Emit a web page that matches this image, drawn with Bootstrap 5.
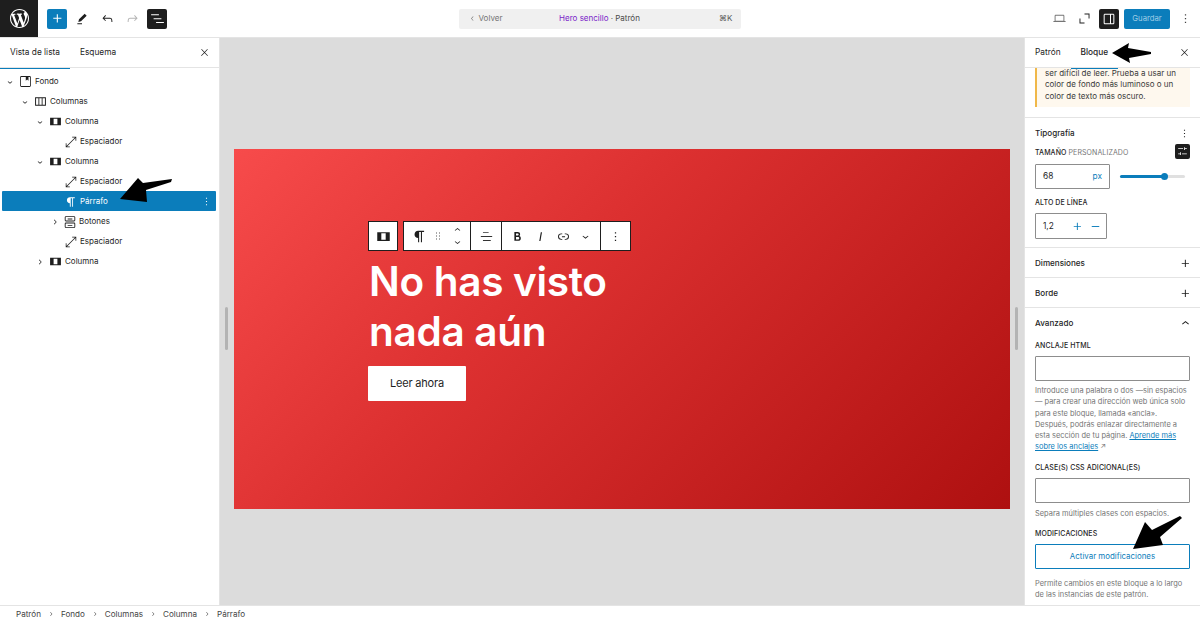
<!DOCTYPE html>
<html lang="es">
<head>
<meta charset="utf-8">
<title>Hero sencillo · Patrón</title>
<link rel="stylesheet" href="https://cdn.jsdelivr.net/npm/bootstrap@5.3.0/dist/css/bootstrap.min.css">
<style>
html,body{height:621px;overflow:hidden}
body{font-family:Inter,"Liberation Sans",sans-serif;font-size:8.3px;color:#1e1e1e;background:#fff;line-height:1.3}
svg{display:block;fill:currentColor}
.shell{height:621px;position:relative}
.topbar{height:38px;border-bottom:1px solid #e4e4e4;flex:none}
.wp-box{width:38px;height:37px;background:#1e1e1e;color:#fff;flex:none}
.ico-btn{width:20px;height:20px;padding:0;border:0;background:none;border-radius:2px;color:#1e1e1e;display:flex;align-items:center;justify-content:center;flex:none}
.ico-btn.blue{background:#0b7dbb;color:#fff}
.ico-btn.dark{background:#1e1e1e;color:#fff}
.ico-btn.faint{color:#b4b4b4}
.cmd{width:282px;height:20px;background:#f0f0f0;border-radius:2px;padding:0 8px 0 9px;color:#757575;position:relative;font-size:8px}
.cmd-title{position:absolute;left:0;right:0;text-align:center;color:#4a4a4a;top:4px}
.cmd-title b{font-weight:400;color:#7a25c9}
.save{height:20px;width:46px;padding:0;background:#0b7dbb;border:0;border-radius:2px;color:#9fcde6;font-size:7.7px}
.left{width:220px;border-right:1px solid #e4e4e4;flex:none}
.right{width:176px;border-left:1px solid #e4e4e4;flex:none;overflow:hidden}
.tabs{height:30px;border-bottom:1px solid #e4e4e4;flex:none;position:relative}
.tab-a{color:#1e1e1e;position:relative;height:30px;display:flex;align-items:center}
.tab-a.on:after{content:"";position:absolute;left:0;right:0;bottom:-1px;height:1px;background:#0b7dbb}
.tree{padding-top:3px;font-size:8px}
.trow{height:20px;margin:0 3px 0 2px;display:flex;align-items:center;border-radius:1px;position:relative;padding-top:1px}
.trow.sel{background:#0b7dbb;color:#fff}
.chev{width:10px;height:10px;flex:none;margin:0 -1px}
.tico{flex:none;width:13px;height:13px;margin-right:3px}
.big{width:14px;height:14px;margin:0 2px 0 -1px}
.lv0{padding-left:4px}.lv1{padding-left:19px}.lv2{padding-left:34px}.lv3{padding-left:49px}
.nochev{padding-left:63px}
.canvas{background:#dcdcdc;position:relative;padding:111px 14px 0}
.hero{height:360px;background:linear-gradient(135deg,#f74b4b 0%,#dc3030 40%,#ae1010 100%);padding:72px 0 0 134px}
.gutter{position:absolute;top:269px;width:3px;height:43px;background:#b3b3b3;border-radius:2px}
.blk{height:30px;gap:5px;margin-bottom:6px}
.blk-g{background:#fff;border:1px solid #1e1e1e;display:flex;align-items:center;height:30px}
.blk-c{height:28px;display:flex;align-items:center;justify-content:center;border-right:1px solid #1e1e1e}
.blk-c:last-child{border-right:0}
.hero-h{font-weight:600;font-size:40.5px;line-height:50px;color:#fff;margin:0 0 9px 1px;letter-spacing:-.3px}
.read{width:98px;height:35px;background:#fff;border-radius:1px;font-size:11px;color:#1e1e1e;display:flex;align-items:center;justify-content:center;letter-spacing:-.2px}
.scroll{overflow:hidden;flex:1}
.warn{margin:0 10px;height:39px;background:#fef8ee;border-left:2px solid #f0b849;color:#3a3a3a;padding-left:8px}
.warn p{margin:0;font-size:8px;line-height:11.4px}
.sect{border-top:1px solid #e4e4e4;padding:0 10px}
.sect-h{font-size:8.1px;font-weight:500;height:29px;padding-top:1px;display:flex;align-items:center;justify-content:space-between}
.lab{font-size:7px;font-weight:500;text-transform:uppercase;letter-spacing:.1px;line-height:10px;color:#1e1e1e;display:block}
.lab em{font-style:normal;color:#757575;font-weight:400}
.fld{border:1px solid #8d8d8d;border-radius:1px;height:25px;background:#fff;padding:0 7px;display:flex;align-items:center;justify-content:space-between}
.blue-t{color:#0b7dbb}
.help{font-size:7.45px;line-height:11.3px;color:#757575;margin:0;white-space:nowrap}
.help a{color:#0b7dbb}
.track{height:3px;width:65px;background:#e0e0e0;border-radius:2px;position:relative}
.fill{height:3px;width:44px;background:#0b7dbb;border-radius:2px}
.thumb{position:absolute;left:41px;top:-2px;width:7px;height:7px;border-radius:50%;background:#0b7dbb}
.txtbox.form-control{height:25px;min-height:0;border:1px solid #8d8d8d;border-radius:1px;padding:0;box-shadow:none}
.act{display:block;width:100%;height:25px;border:1px solid #0b7dbb;border-radius:1px;background:#fff;color:#0b7dbb;font-size:7.9px;padding:0}
.foot{height:16px;border-top:1px solid #e4e4e4;flex:none;padding:1px 0 0 16px;background:#fff;color:#444;font-size:8.1px}
.foot .sep{margin:0 6px;width:8px;height:8px}
.pins{position:absolute;left:0;top:0;pointer-events:none;fill:#000}
</style>
</head>
<body>
<svg width="0" height="0" style="position:absolute">
<defs>
<symbol id="i-down" viewBox="0 0 24 24"><path d="M17.500 11.600L12 16l-5.500-4.400.9-1.200L12 14l4.500-3.600 1 1.200z"/></symbol>
<symbol id="i-right" viewBox="0 0 24 24"><path d="M10.600 6L9.400 7l4.600 5-4.600 5 1.200 1 5.400-6z"/></symbol>
<symbol id="i-close" viewBox="0 0 24 24"><path d="M13 11.800l6.100-6.300-1-1-6.100 6.200-6.100-6.200-1 1 6.100 6.300-6.500 6.700 1 1 6.500-6.600 6.500 6.600 1-1z"/></symbol>
<symbol id="i-more" viewBox="0 0 24 24"><path d="M13 19h-2v-2h2v2zm0-6h-2v-2h2v2zm0-6h-2V5h2v2z"/></symbol>
<symbol id="i-plus" viewBox="0 0 24 24"><path d="M11 12.500V17.500H12.500V12.500H17.500V11H12.500V6H11V11H6V12.500H11Z"/></symbol>
<symbol id="i-minus" viewBox="0 0 24 24"><path d="M6 11.250h12v1.500H6z"/></symbol>
<symbol id="i-para" viewBox="0 0 24 24"><path d="m9.996 14v-.225l.004.000v6.225h1.500v-14.500h2.500v14.500h1.500v-14.500h3v-1.500h-8.504c-2.761 0-5 2.239-5 5 0 2.761 2.239 5 5 5z"/></symbol>
<symbol id="i-col" viewBox="0 0 24 24"><path fill-rule="evenodd" d="M2 5h20v14H2zM8.500 6.800v10.400h7V6.800z"/></symbol>
<symbol id="i-cols" viewBox="0 0 24 24"><path fill-rule="evenodd" d="M2 4h20v16H2zM3.800 5.800v12.400h4.400V5.800zM9.800 5.800v12.400h4.400V5.800zM15.800 5.800v12.400h4.400V5.800z"/></symbol>
<symbol id="i-cover" viewBox="0 0 24 24"><path fill-rule="evenodd" d="M4.500 2h15A2.500 2.500 0 0 1 22 4.500v15a2.500 2.500 0 0 1-2.500 2.500h-15A2.500 2.500 0 0 1 2 19.500v-15A2.500 2.500 0 0 1 4.500 2zm0 1.500a1 1 0 0 0-1 1v15a1 1 0 0 0 1 1h15a1 1 0 0 0 1-1v-15a1 1 0 0 0-1-1H17.500v7l-2.500-2-2.500 2v-7z"/></symbol>
<symbol id="i-resize" viewBox="0 0 24 24"><path d="M14 3h7v7h-1.300V5.200L5.200 19.700H10V21H3v-7h1.300v4.800L18.800 4.300H14z"/></symbol>
<symbol id="i-btns" viewBox="0 0 24 24"><path fill-rule="evenodd" d="M5 2h14a2 2 0 0 1 2 2v5a2 2 0 0 1-2 2H5a2 2 0 0 1-2-2V4a2 2 0 0 1 2-2zm0 1.500a.5.5 0 0 0-.5.5v5a.5.5 0 0 0 .5.5h14a.5.5 0 0 0 .5-.5V4a.5.5 0 0 0-.5-.5zM5 13h14a2 2 0 0 1 2 2v5a2 2 0 0 1-2 2H5a2 2 0 0 1-2-2v-5a2 2 0 0 1 2-2zm0 1.500a.5.5 0 0 0-.5.5v5a.5.5 0 0 0 .5.5h14a.5.5 0 0 0 .5-.5v-5a.5.5 0 0 0-.5-.5zM8 6h8v1.500H8zM8 17h8v1.500H8z"/></symbol>
</defs>
</svg>
<div class="shell d-flex flex-column">
  <header class="topbar d-flex align-items-center">
    <div class="wp-box d-flex align-items-center justify-content-center">
      <svg width="19" height="19" viewBox="0 0 20 20"><path d="M20 10c0-5.510-4.490-10-10-10C4.480 0 0 4.490 0 10c0 5.520 4.480 10 10 10 5.510 0 10-4.480 10-10zM7.780 15.370L4.370 6.220c.550-.020 1.170-.080 1.170-.080.500-.060.440-1.130-.060-1.110 0 0-1.450.110-2.370.110-.180 0-.370 0-.580-.010C4.120 2.690 6.870 1.110 10 1.110c2.330 0 4.450.870 6.050 2.340-.680-.110-1.650.390-1.650 1.580 0 .740.450 1.360.900 2.100.350.610.550 1.360.550 2.460 0 1.490-1.400 5-1.400 5l-3.030-8.370c.540-.020.820-.170.820-.170.500-.050.440-1.250-.060-1.220 0 0-1.440.120-2.380.120-.870 0-2.330-.120-2.330-.120-.500-.030-.560 1.200-.060 1.220l.920.080 1.260 3.410zM17.410 10c.240-.640.740-1.870.430-4.250.700 1.290 1.050 2.710 1.050 4.250 0 3.290-1.730 6.240-4.400 7.780.970-2.590 1.940-5.200 2.920-7.780zM6.100 18.090C3.120 16.650 1.110 13.530 1.110 10c0-1.300.230-2.480.720-3.590C3.250 10.300 4.670 14.200 6.100 18.090zm4.030-6.630l2.580 6.980c-.860.290-1.760.450-2.710.450-.790 0-1.570-.110-2.290-.330.810-2.380 1.620-4.740 2.420-7.100z"/></svg>
    </div>
    <div class="d-flex align-items-center" style="margin-left:9px;gap:5px">
      <button class="ico-btn blue"><svg width="17" height="17"><use href="#i-plus"/></svg></button>
      <button class="ico-btn"><svg width="16" height="16" viewBox="0 0 24 24"><path d="m19 7-3-3-8.500 8.500-1 4 4-1L19 7Zm-7 11.500H5V20h7v-1.500Z"/></svg></button>
      <button class="ico-btn"><svg width="15" height="15" viewBox="0 0 24 24"><path d="M18.300 11.700c-.6-.6-1.400-.9-2.300-.9H6.700l2.900-3.300-1.100-1-4.500 5L8.500 16l1-1-2.700-2.700H16c.5 0 .9.2 1.300.5 1 1 1 3.400 1 4.500v.3h1.500v-.2c0-1.500 0-4.300-1.500-5.700z"/></svg></button>
      <button class="ico-btn faint"><svg width="15" height="15" viewBox="0 0 24 24"><path d="M15.600 6.500l-1.100 1 2.900 3.300H8c-.9 0-1.700.3-2.300.9-1.400 1.500-1.400 4.200-1.400 5.600v.2h1.500v-.3c0-1.100 0-3.500 1-4.500.3-.3.7-.5 1.300-.5h9.200L14.500 15l1.100 1.100 4.600-4.600-4.600-5z"/></svg></button>
      <button class="ico-btn dark"><svg width="17" height="17" viewBox="0 0 24 24"><path d="M3 6h11v1.500H3V6zm3.500 5.500h11V13h-11v-1.500zM21 17H10v1.500h11V17z"/></svg></button>
    </div>
    <div class="flex-grow-1 d-flex justify-content-center" style="padding-right:17px">
      <div class="cmd d-flex align-items-center justify-content-between">
        <span class="d-flex align-items-center" style="gap:2px"><svg width="9" height="9" viewBox="0 0 24 24" style="transform:scaleX(-1)"><use href="#i-right"/></svg>Volver</span>
        <span class="cmd-title"><b>Hero sencillo</b> · Patrón</span>
        <span style="color:#555">⌘K</span>
      </div>
    </div>
    <div class="d-flex align-items-center" style="gap:5px;padding-right:5px">
      <button class="ico-btn" style="color:#757575"><svg width="15" height="15" viewBox="0 0 24 24"><path d="M20.500 16h-.7V8c0-1.100-.9-2-2-2H6.200c-1.100 0-2 .9-2 2v8h-.7c-.8 0-1.500.7-1.500 1.500h20c0-.8-.7-1.500-1.500-1.500zM5.700 8c0-.3.2-.5.500-.5h11.600c.3 0 .5.2.5.5v7.600H5.700V8z"/></svg></button>
      <button class="ico-btn"><svg width="15" height="15" viewBox="0 0 24 24"><path d="M12 4h8v8h-1.500V5.500H12zM4 12h1.500v6.500H12V20H4z"/></svg></button>
      <button class="ico-btn dark"><svg width="16" height="16" viewBox="0 0 24 24"><path fill-rule="evenodd" d="M18 4H6c-1.100 0-2 .9-2 2v12c0 1.100.9 2 2 2h12c1.100 0 2-.9 2-2V6c0-1.100-.9-2-2-2zM5.500 18V6c0-.3.2-.5.5-.5h7.500v13H6c-.3 0-.5-.2-.5-.5zm13 0c0 .3-.2.5-.5.5h-3v-13h3c.3 0 .5.2.5.5z"/></svg></button>
      <button class="save">Guardar</button>
      <button class="ico-btn" style="color:#444"><svg width="15" height="15"><use href="#i-more"/></svg></button>
    </div>
  </header>

  <div class="d-flex flex-grow-1" style="min-height:0">
    <aside class="left d-flex flex-column">
      <div class="tabs d-flex align-items-center">
        <div class="tab-a on" style="padding:0 10px">Vista de lista</div>
        <div class="tab-a" style="margin-left:10px">Esquema</div>
        <svg class="ms-auto" width="11" height="11" viewBox="0 0 24 24" style="margin-right:9px"><use href="#i-close"/></svg>
      </div>
      <div class="tree">
        <div class="trow lv0"><svg class="chev"><use href="#i-down"/></svg><svg class="tico" style="margin-left:5px"><use href="#i-cover"/></svg>Fondo</div>
        <div class="trow lv1"><svg class="chev"><use href="#i-down"/></svg><svg class="tico" style="margin-left:5px"><use href="#i-cols"/></svg>Columnas</div>
        <div class="trow lv2"><svg class="chev"><use href="#i-down"/></svg><svg class="tico" style="margin-left:5px"><use href="#i-col"/></svg>Columna</div>
        <div class="trow nochev"><svg class="tico big"><use href="#i-resize"/></svg>Espaciador</div>
        <div class="trow lv2"><svg class="chev"><use href="#i-down"/></svg><svg class="tico" style="margin-left:5px"><use href="#i-col"/></svg>Columna</div>
        <div class="trow nochev"><svg class="tico big"><use href="#i-resize"/></svg>Espaciador</div>
        <div class="trow nochev sel"><svg class="tico big"><use href="#i-para"/></svg>Párrafo<svg class="ms-auto" width="13" height="13" style="margin-right:3px"><use href="#i-more"/></svg></div>
        <div class="trow lv3"><svg class="chev"><use href="#i-right"/></svg><svg class="tico big" style="margin-left:4px"><use href="#i-btns"/></svg>Botones</div>
        <div class="trow nochev"><svg class="tico big"><use href="#i-resize"/></svg>Espaciador</div>
        <div class="trow lv2"><svg class="chev"><use href="#i-right"/></svg><svg class="tico" style="margin-left:5px"><use href="#i-col"/></svg>Columna</div>
      </div>
    </aside>

    <main class="canvas flex-grow-1">
      <span class="gutter" style="left:5px"></span>
      <span class="gutter" style="right:6px"></span>
      <div class="hero">
        <div class="blk d-flex">
          <div class="blk-g" style="width:30px"><div class="blk-c w-100"><svg width="15" height="15"><use href="#i-col"/></svg></div></div>
          <div class="blk-g">
            <div class="blk-c gap-1" style="width:67px">
              <svg width="17" height="17"><use href="#i-para"/></svg>
              <svg width="12" height="12" viewBox="0 0 24 24" style="color:#555"><path d="M8 7h2V5H8v2zm0 6h2v-2H8v2zm0 6h2v-2H8v2zm6-14v2h2V5h-2zm0 8h2v-2h-2v2zm0 6h2v-2h-2v2z"/></svg>
              <span class="d-flex flex-column" style="margin-left:3px"><svg width="13" height="12" style="transform:scaleY(-1)"><use href="#i-down"/></svg><svg width="13" height="12"><use href="#i-down"/></svg></span>
            </div>
            <div class="blk-c" style="width:31px"><svg width="17" height="17" viewBox="0 0 24 24" style="color:#333"><path d="M7 5.500h8V6.800H7zM4 11.300h16v1.300H4zM7 17h11v1.300H7z"/></svg></div>
            <div class="blk-c" style="width:99px;gap:8px">
              <svg width="15" height="15" viewBox="0 0 24 24"><path d="M14.700 11.300c1-.6 1.500-1.600 1.500-3 0-2.300-1.300-3.400-4-3.400H7v14h5.800c1.400 0 2.500-.3 3.300-1 .8-.7 1.200-1.700 1.200-2.900.1-1.900-.8-3.100-2.600-3.700zm-5.100-4h2.300c.6 0 1.100.1 1.400.4.300.3.500.7.500 1.200s-.2 1-.5 1.200c-.3.300-.8.400-1.400.4H9.600V7.300zm4.600 9c-.4.300-1 .4-1.700.4H9.600v-3.900h2.900c.7 0 1.300.2 1.700.5.400.3.600.8.600 1.500s-.2 1.200-.6 1.500z"/></svg>
              <svg width="15" height="15" viewBox="0 0 24 24"><path d="M12.500 5L10 19h1.900l2.500-14z"/></svg>
              <svg width="15" height="15" viewBox="0 0 24 24"><path d="M10 17.389H8.444A5.194 5.194 0 1 1 8.444 7H10v1.500H8.444a3.694 3.694 0 0 0 0 7.389H10v1.500ZM14 7h1.556a5.194 5.194 0 0 1 0 10.390H14v-1.500h1.556a3.694 3.694 0 0 0 0-7.390H14V7Zm-4.500 6h5v-1.500h-5V13Z"/></svg>
              <svg width="13" height="13"><use href="#i-down"/></svg>
            </div>
            <div class="blk-c" style="width:29px"><svg width="15" height="15"><use href="#i-more"/></svg></div>
          </div>
        </div>
        <h1 class="hero-h">No has visto<br>nada aún</h1>
        <div class="read">Leer ahora</div>
      </div>
    </main>

    <aside class="right d-flex flex-column">
      <div class="tabs d-flex align-items-center" style="padding-left:10px">
        <div class="tab-a">Patrón</div>
        <div class="tab-a on" style="margin-left:10px;padding:0 10px;font-weight:500">Bloque</div>
        <svg class="ms-auto" width="11" height="11" viewBox="0 0 24 24" style="margin-right:10px"><use href="#i-close"/></svg>
      </div>
      <div class="scroll">
        <div class="warn"><p>ser difícil de leer. Prueba a usar un<br>color de fondo más luminoso o un<br>color de texto más oscuro.</p></div>
        <div class="sect" style="margin-top:10px;height:130px;position:relative">
          <div class="sect-h"><span>Tipografía</span><svg width="13" height="13" style="margin-right:-1px"><use href="#i-more"/></svg></div>
          <span class="lab" style="margin-top:1px">Tamaño <em>personalizado</em></span>
          <span class="ico-btn dark" style="position:absolute;right:10px;top:26px;width:15px;height:15px"><svg width="13" height="13" viewBox="0 0 24 24"><path d="M4 7h9V5.500H4zM16.500 5.500V4H15v5h1.500V7H20V5.500zM4 17h3.500v1.500H9v-5H7.500v2H4zM11 15.500h9V17h-9z"/></svg></span>
          <div class="d-flex align-items-center" style="margin-top:6px">
            <div class="fld" style="width:75px"><span>68</span><span class="blue-t">px</span></div>
            <div class="track" style="margin-left:10px"><div class="fill"></div><div class="thumb"></div></div>
          </div>
          <span class="lab" style="margin-top:9px">Alto de línea</span>
          <div class="fld" style="width:72px;margin-top:5px;height:26px"><span>1,2</span><span class="d-flex blue-t" style="gap:3px;margin-right:-4px"><svg width="15" height="15"><use href="#i-plus"/></svg><svg width="15" height="15"><use href="#i-minus"/></svg></span></div>
        </div>
        <div class="sect"><div class="sect-h"><span>Dimensiones</span><svg width="15" height="15" style="margin-right:-3px"><use href="#i-plus"/></svg></div></div>
        <div class="sect"><div class="sect-h"><span>Borde</span><svg width="15" height="15" style="margin-right:-3px"><use href="#i-plus"/></svg></div></div>
        <div class="sect">
          <div class="sect-h"><span>Avanzado</span><svg width="15" height="15" style="transform:scaleY(-1);margin-right:-3px"><use href="#i-down"/></svg></div>
          <label class="lab" style="margin-top:4px">Anclaje HTML</label>
          <input class="form-control txtbox" style="margin-top:5px" aria-label="Anclaje HTML">
          <p class="help" style="margin-top:4px">Introduce una palabra o dos —sin espacios<br>— para crear una dirección web única solo<br>para este bloque, llamada «ancla».<br>Después, podrás enlazar directamente a<br>esta sección de tu página. <a href="#">Aprende más</a><br><a href="#">sobre los anclajes</a> ↗</p>
          <label class="lab" style="margin-top:10px">Clase(s) CSS adicional(es)</label>
          <input class="form-control txtbox" style="margin-top:5px" aria-label="Clases CSS">
          <p class="help" style="margin-top:5px">Separa múltiples clases con espacios.</p>
          <span class="lab" style="margin-top:10px">Modificaciones</span>
          <button class="act" style="margin-top:5px">Activar modificaciones</button>
          <p class="help" style="margin-top:9px">Permite cambios en este bloque a lo largo<br>de las instancias de este patrón.</p>
        </div>
      </div>
    </aside>
  </div>

  <footer class="foot d-flex align-items-center">
    <span>Patrón</span><svg class="sep"><use href="#i-right"/></svg><span>Fondo</span><svg class="sep"><use href="#i-right"/></svg><span>Columnas</span><svg class="sep"><use href="#i-right"/></svg><span>Columna</span><svg class="sep"><use href="#i-right"/></svg><span>Párrafo</span>
  </footer>

  <svg class="pins" width="1200" height="621" viewBox="0 0 1200 621">
    <polygon points="120,199 138,178 143,183 172,179 171,182 146,190 147,202"/>
    <polygon points="1112,53 1129,43 1128,48 1151,52 1151,54 1129,58 1130,63"/>
    <polygon points="1133,549 1145,522 1152,530 1180,516 1182,518 1160,537 1163,545"/>
  </svg>
</div>
</body>
</html>
